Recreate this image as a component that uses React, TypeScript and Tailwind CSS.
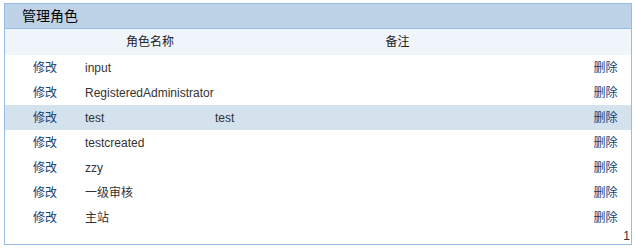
import React from "react";

const rows: { name: string; note: string; selected?: boolean }[] = [
  { name: "input", note: "" },
  { name: "RegisteredAdministrator", note: "" },
  { name: "test", note: "test", selected: true },
  { name: "testcreated", note: "" },
  { name: "zzy", note: "" },
  { name: "一级审核", note: "" },
  { name: "主站", note: "" },
];

const font = {
  fontFamily: '"Liberation Sans", "Noto Sans CJK SC", sans-serif',
};

export default function App() {
  return (
    <div className="w-[635px] h-[252px] bg-white pt-[3px] pl-[4px]" style={font}>
      <div className="w-[628px] h-[242px] border border-[#99bbe8] flex flex-col">
        <div className="h-[25px] bg-[#bed3e8] border-b border-[#99bbe8] flex items-center pl-[17px] text-[14px] text-black leading-none">
          管理角色
        </div>
        <div className="h-[26px] bg-[#f0f5fc] flex items-center text-[12px] text-[#222] leading-none">
          <div className="w-[80px]" />
          <div className="w-[130px] text-center">角色名称</div>
          <div className="flex-1 text-center">备注</div>
          <div className="w-[51px]" />
        </div>
        {rows.map((r) => (
          <div
            key={r.name}
            className={`h-[25px] flex items-center text-[12px] leading-none ${r.selected ? "bg-[#d4e2ee]" : ""}`}
          >
            <div className="w-[80px] text-center text-[#0f4173]">修改</div>
            <div className="w-[130px] text-[#333] whitespace-nowrap">{r.name}</div>
            <div className="flex-1 text-[#333]">{r.note}</div>
            <div className="w-[51px] text-center text-[#0f4173]">删除</div>
          </div>
        ))}
        <div className="flex-1 flex items-end justify-end pr-[1px] text-[12px] leading-none text-[#333] pb-[2px]">
          1
        </div>
      </div>
    </div>
  );
}
